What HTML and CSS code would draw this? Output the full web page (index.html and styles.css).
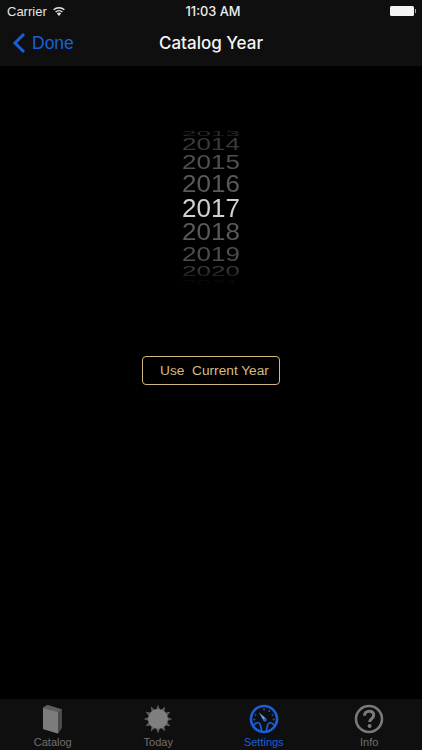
FILE: index.html
```html
<!DOCTYPE html>
<html lang="en">
<head>
<meta charset="utf-8">
<title>Catalog Year</title>
<link rel="stylesheet" href="styles.css">
</head>
<body>
<div class="app">
  <header class="top">
    <div class="status">
      <div class="status-left">
        <span>Carrier</span>
        <svg class="wifi" viewBox="0 0 14 10" width="14" height="10"><path d="M7 10 4.900 7.600a3 3 0 0 1 4.200 0Z" fill="#e6e6e6"/><path d="M3.600 6.100a5 5 0 0 1 6.800 0M1.600 3.800a8 8 0 0 1 10.800 0" fill="none" stroke="#e6e6e6" stroke-width="1.400"/></svg>
      </div>
      <div class="status-time">11:03 AM</div>
      <div class="status-right"><span class="battery"></span><span class="battery-tip"></span></div>
    </div>
    <nav class="navbar">
      <a class="back">
        <svg viewBox="0 0 14 22" width="14" height="22"><path d="M12 2 3 11l9 9" fill="none" stroke="#1a5fd8" stroke-width="3"/></svg>
        <span>Done</span>
      </a>
      <h1 class="title">Catalog Year</h1>
    </nav>
  </header>
  <main class="content">
    <div class="picker">
      <div class="yr y13">2013</div>
      <div class="yr y14">2014</div>
      <div class="yr y15">2015</div>
      <div class="yr y16">2016</div>
      <div class="yr y17">2017</div>
      <div class="yr y18">2018</div>
      <div class="yr y19">2019</div>
      <div class="yr y20">2020</div>
      <div class="yr y21">2021</div>
    </div>
    <button class="use">Use&nbsp; Current Year</button>
  </main>
  <footer class="tabs">
    <div class="tab">
      <svg viewBox="0 0 30 30" width="30" height="30"><path d="M5 3.500 9.500 1 24 5.500V24l-4 5.500L5 25Z" fill="#4a4a4a"/><path d="M9.500 1 24 5.500 20 8 5 3.500Z" fill="#5f5f5f"/><path d="M5 4 20 8V29.500L5 25Z" fill="#7c7c7c"/></svg>
      <span>Catalog</span>
    </div>
    <div class="tab">
      <svg viewBox="0 0 30 30" width="30" height="30"><g fill="#5c5c5c"><path id="ray" d="M15 .500 17.500 7h-5Z"/><path d="M15 .500 17.500 7h-5Z" transform="rotate(30 15 15)"/><path d="M15 .500 17.500 7h-5Z" transform="rotate(60 15 15)"/><path d="M15 .500 17.500 7h-5Z" transform="rotate(90 15 15)"/><path d="M15 .500 17.500 7h-5Z" transform="rotate(120 15 15)"/><path d="M15 .500 17.500 7h-5Z" transform="rotate(150 15 15)"/><path d="M15 .500 17.500 7h-5Z" transform="rotate(180 15 15)"/><path d="M15 .500 17.500 7h-5Z" transform="rotate(210 15 15)"/><path d="M15 .500 17.500 7h-5Z" transform="rotate(240 15 15)"/><path d="M15 .500 17.500 7h-5Z" transform="rotate(270 15 15)"/><path d="M15 .500 17.500 7h-5Z" transform="rotate(300 15 15)"/><path d="M15 .500 17.500 7h-5Z" transform="rotate(330 15 15)"/></g><circle cx="15" cy="15" r="10" fill="#7f7f7f"/></svg>
      <span>Today</span>
    </div>
    <div class="tab active">
      <svg viewBox="0 0 30 30" width="30" height="30"><circle cx="15" cy="15" r="13" fill="none" stroke="#1a5fd8" stroke-width="2.600"/><path d="M4.500 21.500C7 18 10 18 11.200 20.500L12.800 27M25.500 21.500C23 18 20 18 18.800 20.500L17.200 27" fill="none" stroke="#1a5fd8" stroke-width="1.700"/><path d="M9.800 8.200 17 14.400 14.600 16.800Z" fill="#6fa0f0"/><circle cx="16" cy="16" r="1.800" fill="#1a5fd8"/><g fill="#1a5fd8"><circle cx="15" cy="5.500" r=".9"/><circle cx="20.200" cy="7" r=".9"/><circle cx="23.500" cy="10.800" r=".9"/><circle cx="24.600" cy="15.500" r=".9"/><circle cx="6.500" cy="10.800" r=".9"/><circle cx="5.400" cy="15.500" r=".9"/></g></svg>
      <span>Settings</span>
    </div>
    <div class="tab">
      <svg viewBox="0 0 30 30" width="30" height="30"><circle cx="15" cy="15" r="13" fill="none" stroke="#7a7a7a" stroke-width="2.600"/><path d="M10.500 11.800c0-3 2-4.600 4.700-4.600s4.500 1.600 4.500 4c0 3.400-4 3.400-4 6.800" fill="none" stroke="#7a7a7a" stroke-width="3"/><circle cx="15.600" cy="22" r="2" fill="#7a7a7a"/></svg>
      <span>Info</span>
    </div>
  </footer>
</div>
</body>
</html>
```

FILE: styles.css
```css
* { box-sizing: border-box; }
html, body { margin: 0; padding: 0; background: #000; }
.app {
  width: 422px;
  height: 750px;
  display: flex;
  flex-direction: column;
  overflow: hidden;
  background: #000;
  font-family: "Liberation Sans", Arial, sans-serif;
}
.top { height: 66px; background: #0f0f0f; flex: none; }
.status {
  height: 22px;
  padding: 0 6px 0 7px;
  display: grid;
  grid-template-columns: 1fr auto 1fr;
  align-items: center;
  color: #e6e6e6;
  font-size: 13px;
}
.status-left { display: flex; align-items: center; gap: 5px; }
.status-time { padding-left: 3px; font-family: Inter, "Liberation Sans", sans-serif; font-size: 12.800px; font-weight: 500; color: #eee; }
.status-right { display: flex; justify-content: flex-end; align-items: center; }
.battery { width: 24px; height: 10px; background: #f4f4f4; border-radius: 1.500px; }
.battery-tip { width: 1.500px; height: 4px; background: #aaa; margin-left: 1px; }
.navbar {
  height: 42px;
  position: relative;
  display: flex;
  align-items: center;
  justify-content: center;
}
.back {
  position: absolute;
  left: 12px;
  top: 10px;
  display: flex;
  align-items: center;
  gap: 6px;
  color: #1a5fd8;
  font-size: 17.500px;
}
.title { margin: 0; font-size: 17px; font-weight: 500; color: #f4f4f4; font-family: Inter, "Liberation Sans", sans-serif; }
.content { flex: 1; display: flex; flex-direction: column; align-items: center; }
.picker {
  margin-top: 63px;
  width: 90px;
  display: flex;
  flex-direction: column;
  -webkit-mask-image: linear-gradient(#000 0, #000 140px, transparent 156px);
  mask-image: linear-gradient(#000 0, #000 140px, transparent 156px);
}
.yr {
  flex: none;
  text-align: center;
  font-size: 26px;
}
.y13 { height: 8px; line-height: 8px; color: #2a2a2a; transform: scaleY(.3); }
.y14 { height: 15px; line-height: 15px; color: #3a3a3a; transform: scaleY(.6); }
.y15 { height: 20px; line-height: 20px; color: #505050; transform: scaleY(.78); }
.y16 { height: 24px; line-height: 24px; color: #595959; transform: scaleY(.9); }
.y17 { height: 24px; line-height: 24px; color: #d0d0d0; }
.y18 { height: 24px; line-height: 24px; color: #595959; transform: scaleY(.93); }
.y19 { height: 20px; line-height: 20px; color: #4c4c4c; transform: scaleY(.8); }
.y20 { height: 15px; line-height: 15px; color: #3a3a3a; transform: scaleY(.57); }
.y21 { height: 6px; line-height: 6px; color: #2a2a2a; transform: scaleY(.3); }
.use {
  margin-top: 71px;
  width: 138px;
  height: 29px;
  padding: 0 0 0 7px;
  background: transparent;
  border: 1.500px solid #d0b87e;
  border-radius: 4px;
  color: #d5bd80;
  font-family: "Liberation Sans", Arial, sans-serif;
  font-size: 13.700px;
}
.tabs {
  height: 51px;
  flex: none;
  background: #0f0f0f;
  display: grid;
  grid-template-columns: repeat(4, 1fr);
}
.tab {
  display: flex;
  flex-direction: column;
  align-items: center;
  padding-top: 5px;
  gap: 2px;
  color: #707070;
  font-size: 11px;
}
.tab.active { color: #1a5fd8; }
.tab svg { flex: none; }
```
